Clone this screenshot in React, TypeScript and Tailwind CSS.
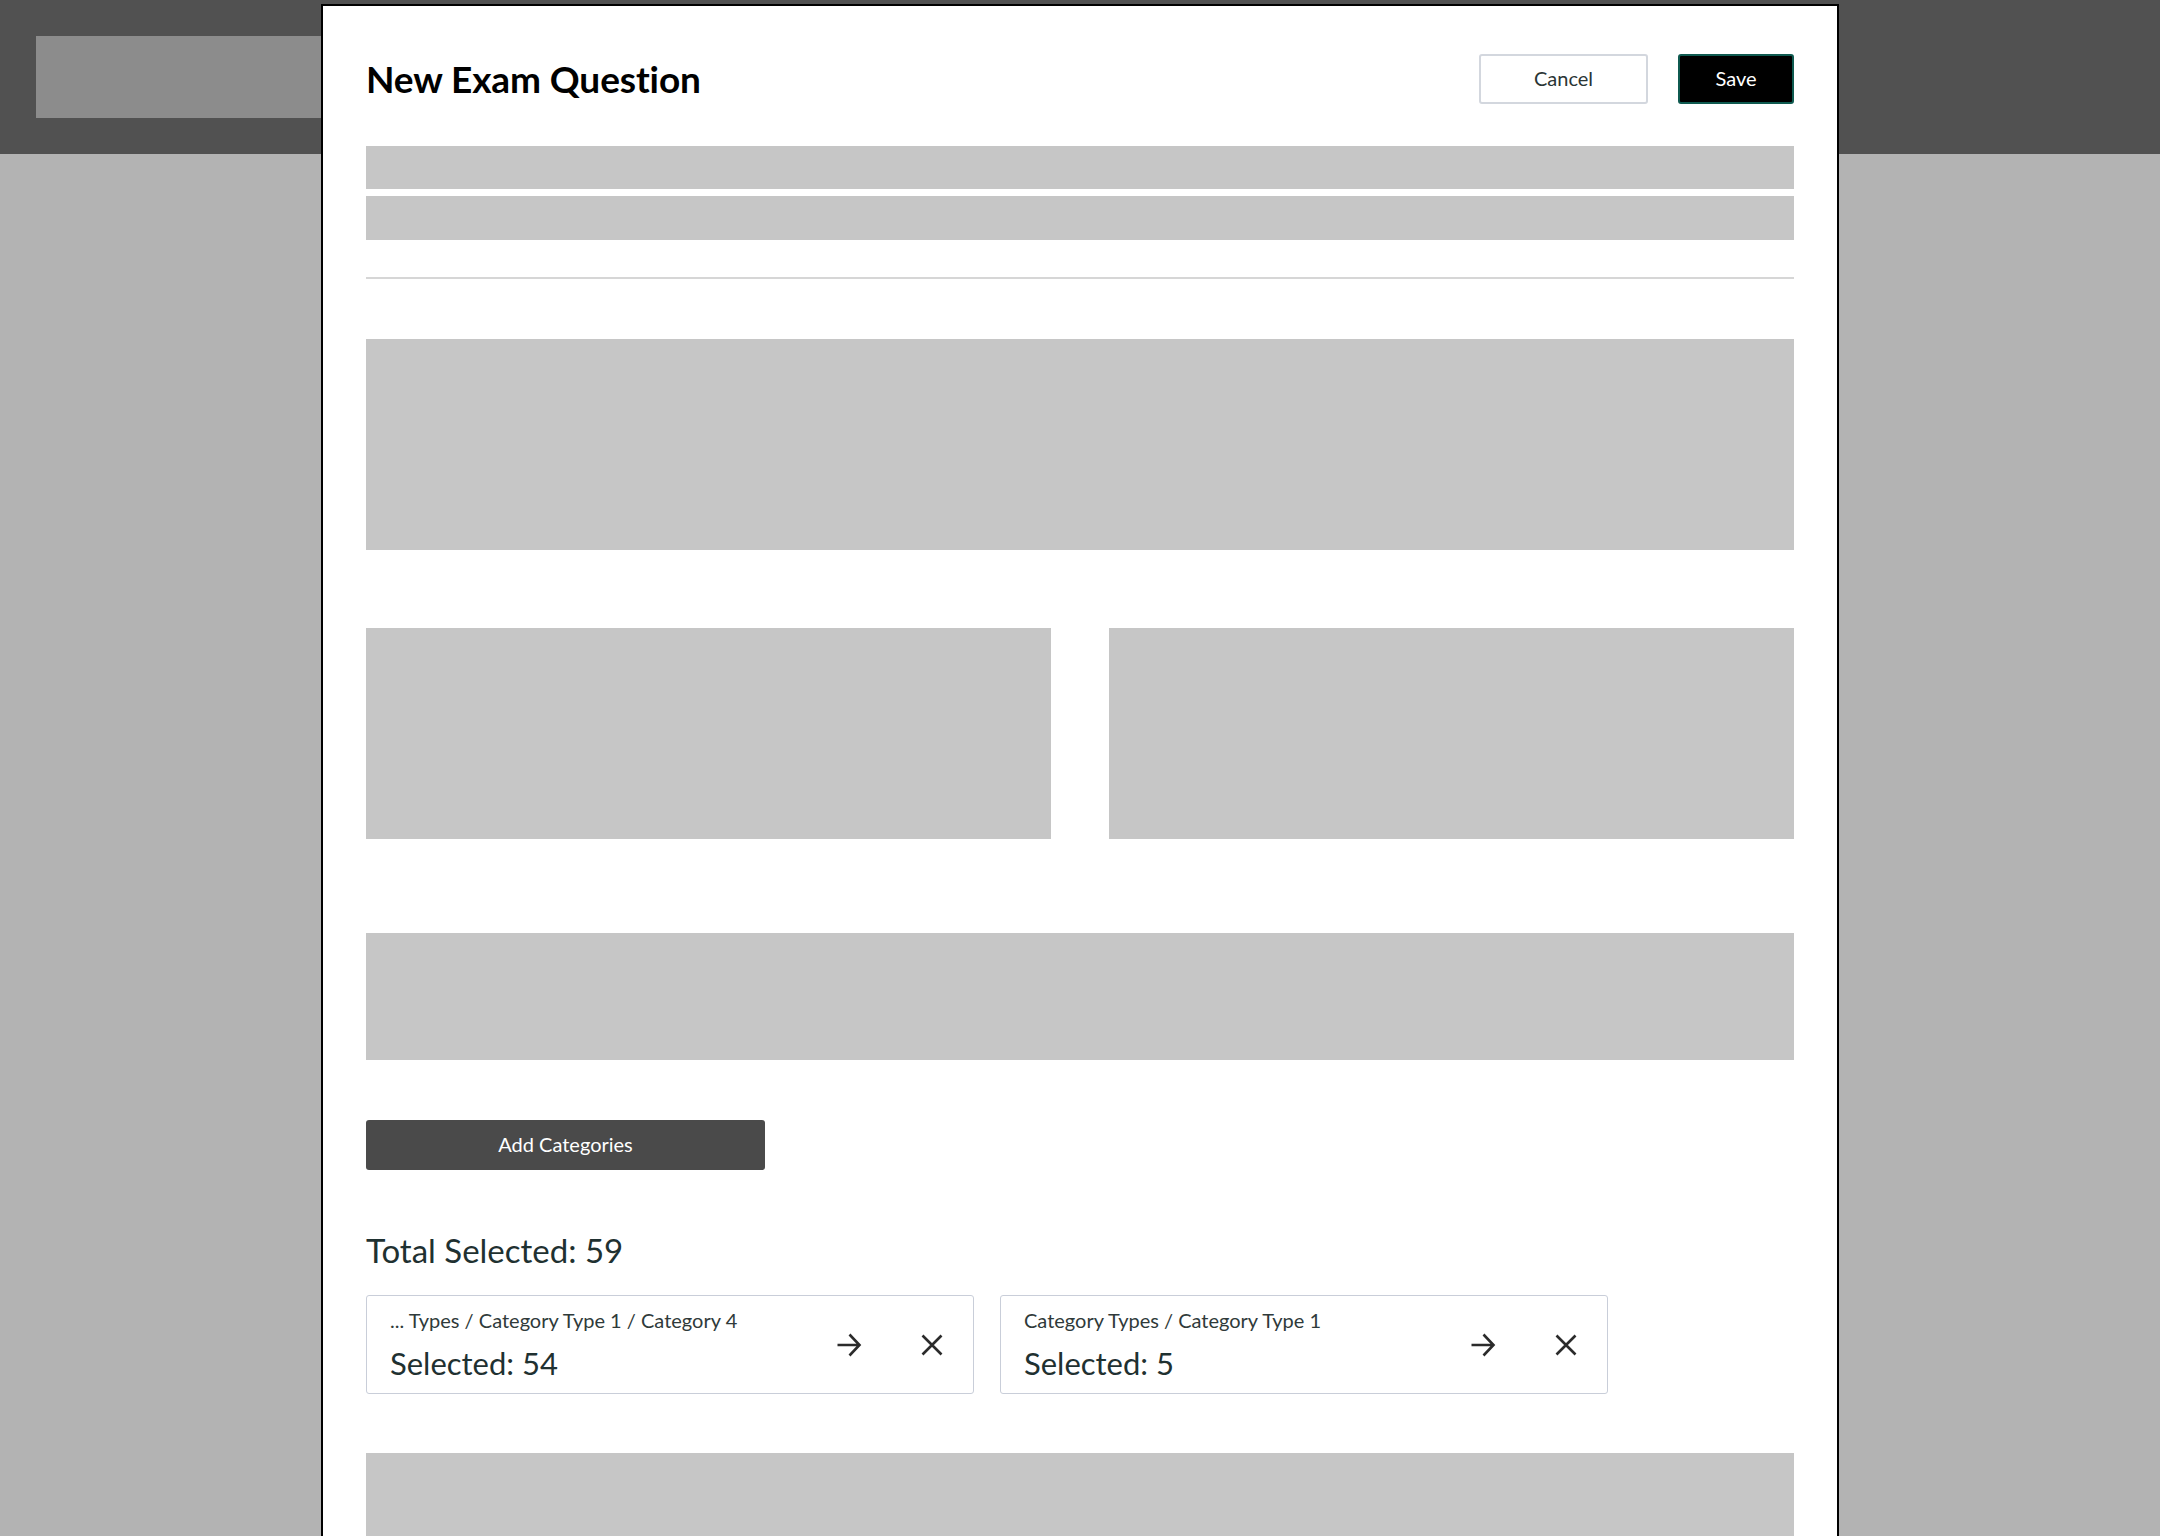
import React from 'react';

const ArrowIcon = () => (
	<svg width="26" height="26" viewBox="0 0 26 26" fill="none" stroke="#2b2b2b" strokeWidth="2.6" strokeLinecap="butt" strokeLinejoin="miter">
		<path d="M1.5 13H23.5M13.5 2.5 23.5 13l-10 10.5" />
	</svg>
);

const CloseIcon = () => (
	<svg width="22" height="22" viewBox="0 0 22 22" fill="none" stroke="#2b2b2b" strokeWidth="2.6">
		<path d="M1.5 1.5 20.5 20.5M20.5 1.5 1.5 20.5" />
	</svg>
);

const CategoryCard = ({ path, count }: { path: string; count: number }) => (
	<div className="w-[608px] h-[99px] border border-[#c9ced9] rounded-[3px] flex items-center justify-between pl-[23px] pr-[30px] bg-white">
		<div className="flex flex-col">
			<div className="text-[20px] leading-[26px] text-[#2f3a3a]">{path}</div>
			<div className="mt-[10px] text-[31px] leading-[40px] text-[#1f3131]">Selected: {count}</div>
		</div>
		<div className="flex items-center gap-[59px]">
			<button className="flex items-center justify-center">
				<ArrowIcon />
			</button>
			<button className="flex items-center justify-center">
				<CloseIcon />
			</button>
		</div>
	</div>
);

export default function App() {
	return (
		<div className="relative h-screen w-full overflow-hidden bg-[#b3b3b3] font-['Lato','Noto_Sans',sans-serif]">
			{/* Page header behind the modal */}
			<header className="h-[154px] bg-[#515151] pt-[36px] pl-[36px]">
				<div className="w-[420px] h-[82px] bg-[#8c8c8c]" />
			</header>

			{/* Modal */}
			<div className="absolute top-[4px] left-1/2 -translate-x-1/2 w-[1518px] h-[1600px] bg-white border-2 border-black px-[43px] pt-[48px]">
				<div className="flex items-center justify-between h-[50px]">
					<h1 className="text-[37px] font-bold text-black tracking-[-0.1px]">New Exam Question</h1>
					<div className="flex items-center gap-[30px]">
						<button className="w-[169px] h-[50px] pb-[2px] border-2 border-[#d3d7de] rounded-[3px] bg-white text-[20px] text-[#2a3535]">
							Cancel
						</button>
						<button className="w-[116px] h-[50px] pb-[2px] border-2 border-[#0f5a50] rounded-[3px] bg-black text-[20px] text-white">
							Save
						</button>
					</div>
				</div>

				<div className="mt-[42px] flex flex-col gap-[7px]">
					<div className="h-[43px] bg-[#c6c6c6]" />
					<div className="h-[44px] bg-[#c6c6c6]" />
				</div>

				<div className="mt-[37px] h-[2px] bg-[#d6d6d6]" />

				<div className="mt-[60px] h-[211px] bg-[#c6c6c6]" />

				<div className="mt-[78px] grid grid-cols-2 gap-[58px]">
					<div className="h-[211px] bg-[#c6c6c6]" />
					<div className="h-[211px] bg-[#c6c6c6]" />
				</div>

				<div className="mt-[94px] h-[127px] bg-[#c6c6c6]" />

				<button className="mt-[60px] w-[399px] h-[50px] pb-[2px] rounded-[3px] bg-[#4a4a4a] text-[20px] text-white">
					Add Categories
				</button>

				<div className="mt-[60px] text-[33px] leading-[40px] text-[#1f3131]">Total Selected: 59</div>

				<div className="mt-[25px] flex gap-[26px]">
					<CategoryCard path="... Types / Category Type 1 / Category 4" count={54} />
					<CategoryCard path="Category Types / Category Type 1" count={5} />
				</div>

				<div className="mt-[59px] h-[200px] bg-[#c6c6c6]" />
			</div>
		</div>
	);
}
